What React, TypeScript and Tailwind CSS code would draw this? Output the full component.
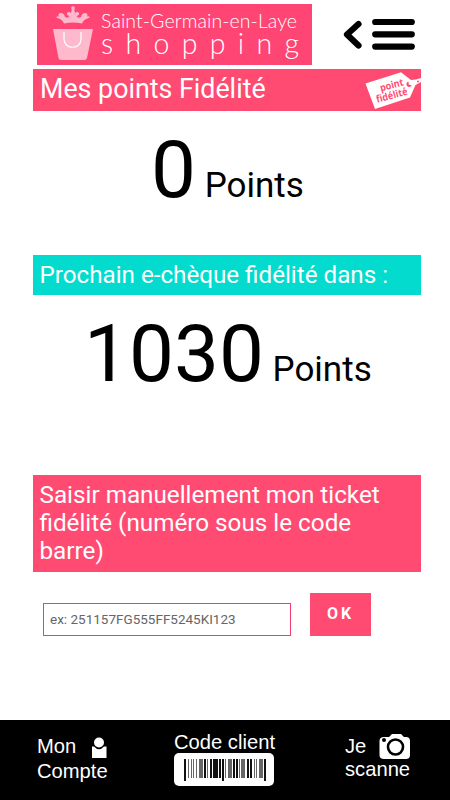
const bars = [
  [0, 2, 22], [4, 1, 19], [7, 1, 19], [9, 1, 19], [12, 1, 19], [15, 4, 19], [20, 2, 19],
  [23, 1, 19], [26, 2, 19], [29, 5, 19], [35, 2, 19], [38, 2, 22], [41, 1, 19],
  [44, 4, 19], [49, 2, 19], [52, 2, 19], [55, 1, 19], [57, 4, 19], [63, 2, 19], [66, 2, 19],
  [70, 1, 19], [72, 1, 19], [75, 4, 19], [80, 2, 22],
];

function Logo() {
  return (
    <svg className="ml-1 h-[61px] w-[275px] bg-[#ff4574]" viewBox="0 0 275 61">
      <g fill="#ffb9cc">
        <path d="M16 25h40l-6 29q-.6 2-2.500 2H24q-2 0-2.500-2z" />
        <path d="M27 19.500Q25.500 15.500 21 14.300q-2-.5-1.500-1.600 1-1 2.500-.2-1.400-3 1.500-3.500 3.800 0 4.500 4 3 1.700 4.500-1-3.500-1-2.300-3.200 1.500-1.800 3.800.2L34.700 6q-1.500-3.500 1.300-3.800 2.800.3 1.300 3.800L38 9q2.300-2 3.800-.2 1.200 2.200-2.300 3.200 1.500 2.700 4.500 1 .7-4 4.500-4 2.900.5 1.500 3.500 1.500-.8 2.500.2.500 1.100-1.500 1.600-4.500 1.200-6 5.200-9-2-18 0z" />
      </g>
      <path d="M27 28v7c0 11 17 11 17 0v-7" fill="none" stroke="#fff" strokeWidth="1.200" />
      <g fill="#fff" className="font-['Lato'] font-light">
        <text x="64" y="23.500" fontSize="19.500" textLength="196">Saint-Germain-en-Laye</text>
        <text x="64" y="49.500" fontSize="28.500" textLength="198">shopping</text>
      </g>
    </svg>
  );
}

function PriceTag() {
  return (
    <svg className="absolute -right-px top-0 h-[42px] w-[58px]" viewBox="0 0 58 42">
      <path d="M1.500 14.500 37 3.200 47 11l5-.5 6-1.800v3.800L51.500 16 46 28.500 11 40z" fill="#fff" />
      <path d="M44.500 12.500a2.800 2.800 0 1 0 3.200 4l-3-1z" fill="#ff4b72" />
      <circle cx="54" cy="12.500" r="1" fill="#ff4b72" />
      <g fill="#ff4b72" className="font-['Open_Sans'] font-bold" transform="rotate(-15 28 21)">
        <text x="17" y="19.500" fontSize="10" textLength="24" lengthAdjust="spacingAndGlyphs">point</text>
        <text x="10.500" y="29.500" fontSize="10" textLength="32" lengthAdjust="spacingAndGlyphs">fidélité</text>
      </g>
    </svg>
  );
}

function Header() {
  return (
    <header className="flex h-[69px] pl-[33px] pt-1">
      <Logo />
      <svg className="ml-[30px] mt-[13px] h-[36px] w-[76px]" viewBox="0 0 76 36" fill="none" stroke="#000" strokeLinecap="round" strokeLinejoin="round" strokeWidth="6.200">
        <path d="M16.500 7 5 17.500l11.500 11M33.200 5h36.600M33.200 17.300h36.600M33.200 29.600h36.600" />
      </svg>
    </header>
  );
}

function Footer() {
  return (
    <footer className="flex h-20 bg-black font-['Liberation_Sans',sans-serif] text-[20.200px] leading-6 text-white">
      <div className="w-[136px] pl-[37px] pt-[14px]">
        <div className="flex">
          <span className="w-[54px]">Mon</span>
          <svg className="mt-[3px] h-[22px] w-4" viewBox="0 0 16 22" fill="#fff">
            <path d="M1 9.500h2q5 5.500 10 0h2.500V21H1z" />
            <circle cx="8" cy="5.500" r="5" />
          </svg>
        </div>
        <div>Compte</div>
      </div>
      <div className="w-[209px] pl-[38px] pt-[10px]">
        <div>Code client</div>
        <svg className="-mt-px h-[33px] w-[100px]" viewBox="0 0 100 33">
          <rect width="100" height="33" rx="5" fill="#fff" />
          {bars.map(([x, w, h]) => (
            <rect key={x} x={x + 10} y="6" width={w} height={h} fill={w === 4 || w === 1 ? '#666' : '#111'} />
          ))}
        </svg>
      </div>
      <div className="pt-[14px]">
        <div className="flex h-[23px]">
          <span className="w-[34px]">Je</span>
          <svg className="h-[26px] w-8" viewBox="0 0 32 26">
            <path d="M5 3h5l3-3h9l3 3h2q4 0 4 4v14q0 4-4 4H5q-4.500 0-4.500-4V7q0-4 4.500-4z" fill="#fff" />
            <circle cx="16.500" cy="13" r="7.500" fill="#fff" stroke="#000" strokeWidth="2.600" />
            <circle cx="5" cy="6" r="2" />
          </svg>
        </div>
        <div>scanne</div>
      </div>
    </footer>
  );
}

export default function App() {
  return (
    <div className="flex h-[800px] w-[450px] flex-col overflow-hidden bg-white font-['Roboto',sans-serif] text-black">
      <Header />
      <main className="ml-[33px] w-[388px] flex-1">
        <div className="relative h-[42px] bg-[#ff4b72] pl-[7px] text-[26.800px] leading-[40px] text-white">
          Mes points Fidélité
          <PriceTag />
        </div>
        <div className="h-36 pl-[118px] pt-[12px] text-[80px] leading-[94px]">
          0<span className="text-[35px]"> Points</span>
        </div>
        <div className="h-10 bg-[#02dbcd] pl-[6.500px] text-[24.200px] leading-10 text-white">
          Prochain e-chèque fidélité dans :
        </div>
        <div className="h-[180px] pl-[51px] pt-[12px] text-[80px] leading-[94px]">
          1030<span className="text-[35px]"> Points</span>
        </div>
        <div className="h-[97px] bg-[#ff4b72] pl-[6.500px] pt-[6px] text-[24.250px] leading-7 text-white">
          Saisir manuellement mon ticket<br />fidélité (numéro sous le code<br />barre)
        </div>
        <form className="flex items-end pl-[10px] pt-[21px]">
          <input
            className="h-[33px] w-[248px] border border-[#f33e6b] px-[6px] pb-[2px] text-[13.500px] placeholder:text-[#666]"
            placeholder="ex: 251157FG555FF5245KI123"
          />
          <button type="button" className="ml-[19px] h-[43px] w-[61px] bg-[#ff4b72] pb-[2px] text-[16px] font-bold tracking-[3px] text-white">
            OK
          </button>
        </form>
      </main>
      <Footer />
    </div>
  );
}
